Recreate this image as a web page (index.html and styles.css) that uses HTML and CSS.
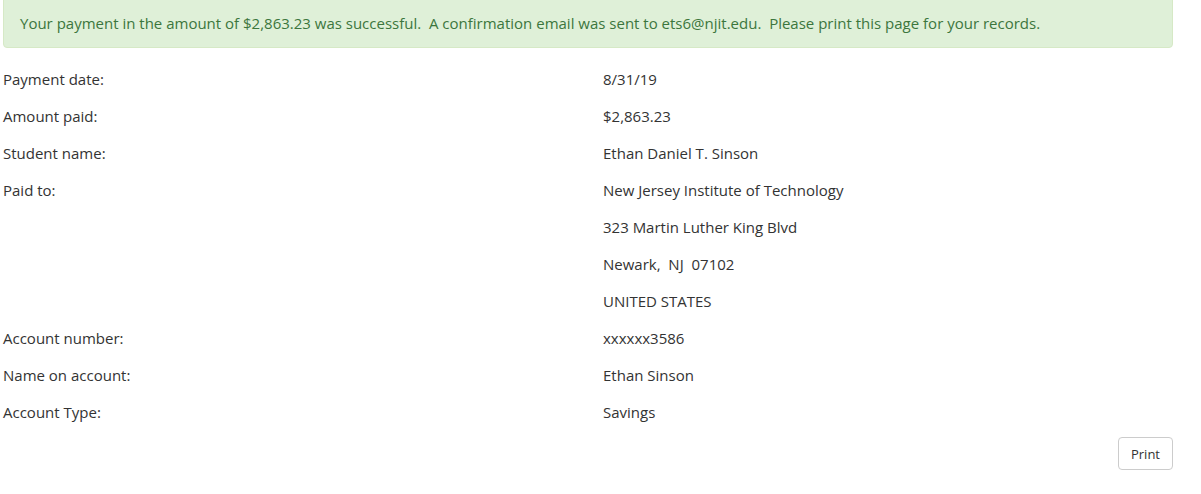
FILE: index.html
```html
<!DOCTYPE html>
<html>
<head>
<meta charset="utf-8">
<link rel="stylesheet" href="styles.css">
</head>
<body>
<div class="page">
  <div class="alert">Your payment in the amount of $2,863.23 was successful.&nbsp; A confirmation email was sent to ets6@njit.edu.&nbsp; Please print this page for your records.</div>
  <div class="details">
    <div class="row"><div class="label">Payment date:</div><div class="value">8/31/19</div></div>
    <div class="row"><div class="label">Amount paid:</div><div class="value">$2,863.23</div></div>
    <div class="row"><div class="label">Student name:</div><div class="value">Ethan Daniel T. Sinson</div></div>
    <div class="row"><div class="label">Paid to:</div><div class="value">New Jersey Institute of Technology</div></div>
    <div class="row"><div class="label"></div><div class="value">323 Martin Luther King Blvd</div></div>
    <div class="row"><div class="label"></div><div class="value">Newark,&nbsp; NJ&nbsp; 07102</div></div>
    <div class="row"><div class="label"></div><div class="value">UNITED STATES</div></div>
    <div class="row"><div class="label">Account number:</div><div class="value">xxxxxx3586</div></div>
    <div class="row"><div class="label">Name on account:</div><div class="value">Ethan Sinson</div></div>
    <div class="row"><div class="label">Account Type:</div><div class="value">Savings</div></div>
  </div>
  <div class="actions"><button class="btn">Print</button></div>
</div>
</body>
</html>
```
FILE: styles.css
```css
html, body {
  margin: 0;
  padding: 0;
  background: #fff;
}
body {
  font-family: "Open Sans", "Noto Sans", sans-serif;
  font-size: 15px;
  color: #333;
}
.page {
  width: 1170px;
  margin-left: 3px;
}
.alert {
  margin-top: -4px;
  padding: 16px 16px 14px;
  line-height: 20px;
  background: #dff0d8;
  border: 1px solid #d6e9c6;
  border-radius: 4px;
  color: #3c763d;
}
.details {
  margin-top: 13px;
}
.row {
  display: grid;
  grid-template-columns: 600px 1fr;
  height: 37px;
  line-height: 37px;
}
.actions {
  display: flex;
  justify-content: flex-end;
  margin-top: 6px;
}
.btn {
  font-family: inherit;
  font-size: 13px;
  color: #333;
  background: #fff;
  border: 1px solid #ccc;
  border-radius: 4px;
  height: 33px;
  width: 55px;
  padding: 0;
}
```
